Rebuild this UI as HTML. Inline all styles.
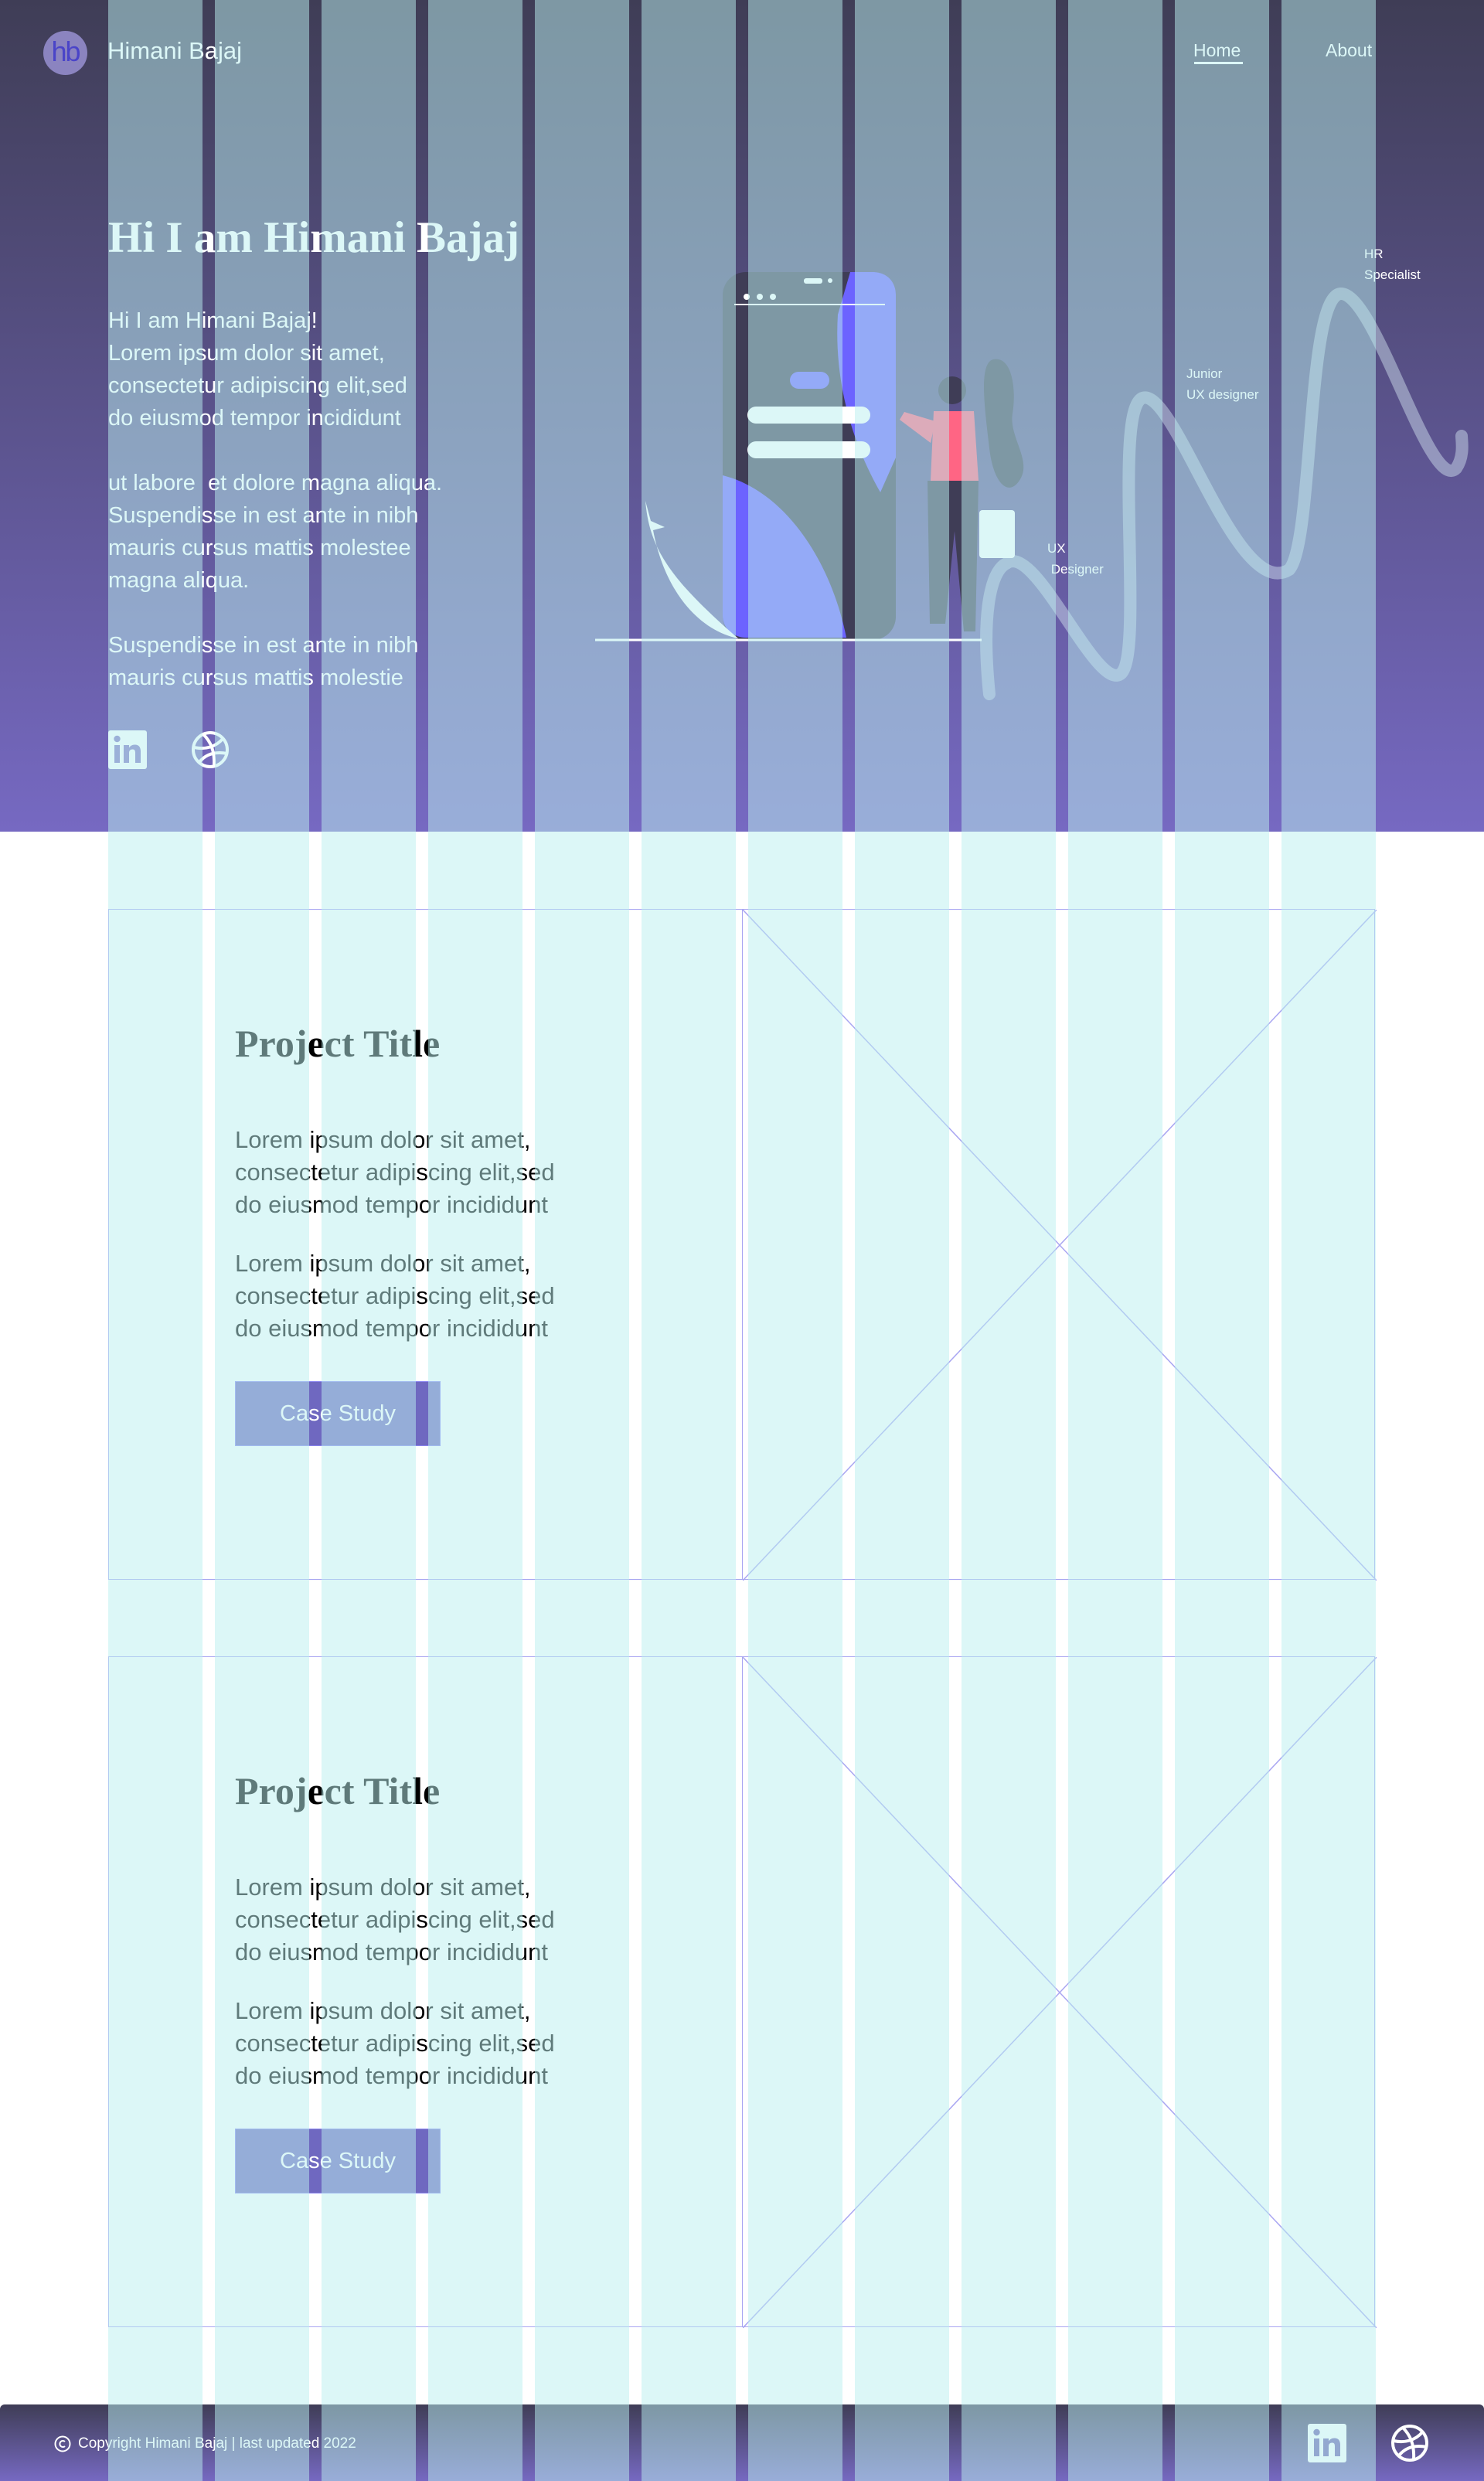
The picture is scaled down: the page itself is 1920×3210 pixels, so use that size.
<!DOCTYPE html>
<html><head><meta charset="utf-8">
<style>
*{margin:0;padding:0;box-sizing:border-box}
body{width:1920px;height:3210px;position:relative;background:#fff;font-family:"Liberation Sans",sans-serif;overflow:hidden}
.hero{position:absolute;left:0;top:0;width:1920px;height:1076px;background:linear-gradient(#3f3d56,#7669c2)}
.footer{position:absolute;left:0;top:3111px;width:1920px;height:99px;background:linear-gradient(#3f3d56,#7669c2);border-radius:6px 6px 0 0}
.ov{position:absolute;top:0;height:3210px;width:122px;background:rgba(186,240,240,0.51);z-index:50}
.abs{position:absolute}
.w{color:#fff}
.card{position:absolute;left:140px;width:1639px;border:1.5px solid #a9a6f2}
.card .img{position:absolute;left:819px;top:0;width:820px;height:100%;border-left:1.5px solid #a9a6f2}
.pt{position:absolute;left:163px;font-family:"Liberation Serif",serif;font-weight:bold;font-size:50px;color:#000}
.pp{position:absolute;left:163px;font-size:31px;line-height:42px;color:#000;width:600px;white-space:nowrap}
.btn{position:absolute;left:163px;width:266px;height:84px;background:#6f68c0;border:1px solid #8a85f0;color:#fff;font-size:29px;text-align:center;line-height:82px}
</style></head><body>
<div class="hero"></div>
<div class="footer"></div>

<div class="abs" style="left:56px;top:40px;width:57px;height:57px;border-radius:50%;background:#8b84c0;color:#4a44c8;font-size:36px;text-align:center;line-height:54px;letter-spacing:-2px">hb</div>
<div class="abs w" style="left:139px;top:48px;font-size:31px">Himani Bajaj</div>
<div class="abs w" style="left:1544px;top:52px;font-size:23px">Home</div>
<div class="abs" style="left:1545px;top:80px;width:63px;height:3px;background:#fff"></div>
<div class="abs w" style="left:1715px;top:52px;font-size:23px">About</div>

<div class="abs w" style="left:140px;top:275px;font-family:'Liberation Serif',serif;font-weight:bold;font-size:57px;white-space:nowrap">Hi I am Himani Bajaj</div>
<div class="abs w" style="left:140px;top:394px;font-size:29px;line-height:42px;white-space:nowrap">Hi I am Himani Bajaj!<br>Lorem ipsum dolor sit amet,<br>consectetur adipiscing elit,sed<br>do eiusmod tempor incididunt<br><br>ut labore &nbsp;et dolore magna aliqua.<br>Suspendisse in est ante in nibh<br>mauris cursus mattis molestee<br>magna aliqua.<br><br>Suspendisse in est ante in nibh<br>mauris cursus mattis molestie</div>

<svg class="abs" style="left:140px;top:945px" width="50" height="50" viewBox="0 0 50 50"><rect width="50" height="50" rx="3" fill="#fff"/><rect x="8" y="19" width="7" height="23" fill="#7a6fc0"/><circle cx="11.5" cy="11" r="4.2" fill="#7a6fc0"/><path d="M20 19h7v3.5c1.5-2.5 4-4 7.5-4 5 0 7.5 3 7.5 9V42h-7V29c0-3-1-4.5-3.5-4.5S27 26 27 29v13h-7z" fill="#7a6fc0"/></svg>
<svg class="abs" style="left:247px;top:945px" width="50" height="50" viewBox="0 0 50 50" fill="none" stroke="#fff" stroke-width="4"><circle cx="25" cy="25" r="22"/><path d="M16 5c10 10 15 22 14 41"/><path d="M4 22c14 3 28 0 38-12"/><path d="M11 41c8-10 20-14 36-11"/></svg>

<svg class="abs" style="left:760px;top:340px" width="1160" height="580" viewBox="760 340 1160 580">
 <path d="M1280 898C1270 800 1280 740 1302 729C1340 700 1420 900 1451 871C1480 840 1440 530 1478 515C1520 500 1600 780 1668 737C1700 700 1690 380 1735 380C1780 380 1850 640 1884 606C1895 590 1891 570 1891 564" fill="none" stroke="rgba(215,232,245,0.45)" stroke-width="16" stroke-linecap="round"/>
 <rect x="935" y="352" width="224" height="476" rx="30" fill="#3f3d56"/>
 <path d="M1100 352h29c18 0 30 12 30 30v210l-20 45c-40-70-60-150-55-230z" fill="#6c63ff"/>
 <path d="M935 615c80 20 140 110 160 210h-130c-16 0-30-12-30-28z" fill="#6c63ff"/>
 <rect x="1040" y="360" width="24" height="7" rx="3" fill="#fff"/><circle cx="1074" cy="363" r="3" fill="#fff"/>
 <circle cx="966" cy="384" r="4" fill="#fff"/><circle cx="983" cy="384" r="4" fill="#fff"/><circle cx="1000" cy="384" r="4" fill="#fff"/>
 <rect x="950" y="393" width="195" height="2" fill="#fff"/>
 <rect x="1022" y="481" width="51" height="22" rx="11" fill="#6c63ff"/>
 <rect x="967" y="526" width="159" height="22" rx="11" fill="#fff"/>
 <rect x="967" y="571" width="159" height="22" rx="11" fill="#fff"/>
 <path d="M835 648c5 60 30 100 120 178c-50-10-95-60-110-140l15-4-18-8z" fill="#fff"/>
 <path d="M1285 465c25-5 30 40 25 70s25 60 10 85-35 5-40-40 -15-110 5-115z" fill="#3f3d56"/>
 <circle cx="1232" cy="505" r="18" fill="#3f3d56"/>
 <path d="M1208 532h52l6 90h-62z" fill="#ff6584"/>
 <path d="M1210 545l-40-12-6 10 40 30z" fill="#ff6584"/>
 <path d="M1200 622h66l-4 195h-15l-12-130-12 120h-20z" fill="#3f3d56"/>
 <rect x="1267" y="660" width="46" height="62" rx="4" fill="#fff"/>
 <path d="M770 828h500" stroke="#fff" stroke-width="3"/>
</svg>
<div class="abs w" style="left:1765px;top:315px;font-size:17px;line-height:27px">HR<br>Specialist</div>
<div class="abs w" style="left:1535px;top:470px;font-size:17px;line-height:27px">Junior<br>UX designer</div>
<div class="abs w" style="left:1355px;top:696px;font-size:17px;line-height:27px">UX<br>&nbsp;Designer</div>

<div class="card" style="top:1176px;height:868px">
 <div class="img"><svg width="820" height="868" style="position:absolute;left:0;top:0"><line x1="0" y1="0" x2="820" y2="868" stroke="#a9a6f2" stroke-width="1.5"/><line x1="820" y1="0" x2="0" y2="868" stroke="#a9a6f2" stroke-width="1.5"/></svg></div>
 <div class="pt" style="top:144px">Project Title</div>
 <div class="pp" style="top:277px">Lorem ipsum dolor sit amet,<br>consectetur adipiscing elit,sed<br>do eiusmod tempor incididunt</div>
 <div class="pp" style="top:437px">Lorem ipsum dolor sit amet,<br>consectetur adipiscing elit,sed<br>do eiusmod tempor incididunt</div>
 <div class="btn" style="top:610px">Case Study</div>
</div>
<div class="card" style="top:2143px;height:868px">
 <div class="img"><svg width="820" height="868" style="position:absolute;left:0;top:0"><line x1="0" y1="0" x2="820" y2="868" stroke="#a9a6f2" stroke-width="1.5"/><line x1="820" y1="0" x2="0" y2="868" stroke="#a9a6f2" stroke-width="1.5"/></svg></div>
 <div class="pt" style="top:144px">Project Title</div>
 <div class="pp" style="top:277px">Lorem ipsum dolor sit amet,<br>consectetur adipiscing elit,sed<br>do eiusmod tempor incididunt</div>
 <div class="pp" style="top:437px">Lorem ipsum dolor sit amet,<br>consectetur adipiscing elit,sed<br>do eiusmod tempor incididunt</div>
 <div class="btn" style="top:610px">Case Study</div>
</div>

<svg class="abs" style="left:70px;top:3151px" width="22" height="22" viewBox="0 0 22 22"><circle cx="11" cy="11" r="9.5" fill="none" stroke="#fff" stroke-width="2"/><path d="M14 8a4 4 0 1 0 0 6" fill="none" stroke="#fff" stroke-width="2"/></svg>
<div class="abs w" style="left:101px;top:3151px;font-size:19px">Copyright Himani Bajaj | last updated 2022</div>
<svg class="abs" style="left:1692px;top:3136px" width="50" height="50" viewBox="0 0 50 50"><rect width="50" height="50" rx="3" fill="#fff"/><rect x="8" y="19" width="7" height="23" fill="#6a5fb0"/><circle cx="11.5" cy="11" r="4.2" fill="#6a5fb0"/><path d="M20 19h7v3.5c1.5-2.5 4-4 7.5-4 5 0 7.5 3 7.5 9V42h-7V29c0-3-1-4.5-3.5-4.5S27 26 27 29v13h-7z" fill="#6a5fb0"/></svg>
<svg class="abs" style="left:1799px;top:3136px" width="50" height="50" viewBox="0 0 50 50" fill="none" stroke="#fff" stroke-width="4"><circle cx="25" cy="25" r="22"/><path d="M16 5c10 10 15 22 14 41"/><path d="M4 22c14 3 28 0 38-12"/><path d="M11 41c8-10 20-14 36-11"/></svg>

<div class="ov" style="left:140px"></div><div class="ov" style="left:278px"></div><div class="ov" style="left:416px"></div><div class="ov" style="left:554px"></div><div class="ov" style="left:692px"></div><div class="ov" style="left:830px"></div><div class="ov" style="left:968px"></div><div class="ov" style="left:1106px"></div><div class="ov" style="left:1244px"></div><div class="ov" style="left:1382px"></div><div class="ov" style="left:1520px"></div><div class="ov" style="left:1658px"></div>
</body></html>
